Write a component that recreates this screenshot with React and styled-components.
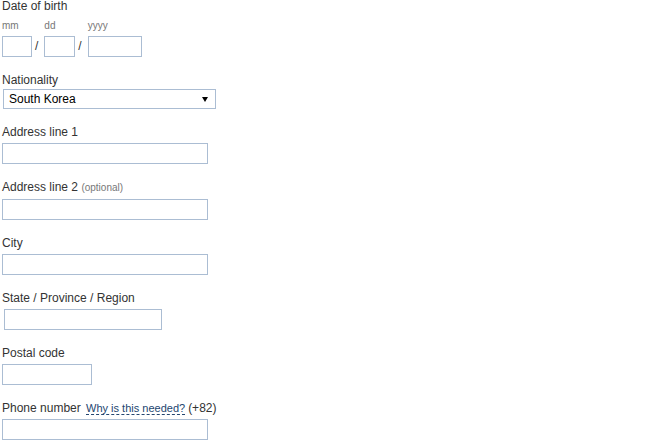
import React from 'react';
import styled, { createGlobalStyle } from 'styled-components';

const GlobalStyle = createGlobalStyle`
  html, body {
    margin: 0;
    padding: 0;
    background: #ffffff;
  }
  body {
    font-family: Arial, "Liberation Sans", sans-serif;
    color: #333333;
  }
`;

const Form = styled.form`
  display: flex;
  flex-direction: column;
  gap: 16px;
  margin-top: -1px;
  padding-left: 2px;
  width: 260px;
`;

const Field = styled.div`
  display: flex;
  flex-direction: column;
  align-items: flex-start;
`;

const Label = styled.label`
  font-size: 12px;
  line-height: 14px;
  color: #333333;
  margin-bottom: ${(p) => (p.$tight ? '2px' : '4px')};
  white-space: nowrap;
`;

const Optional = styled.span`
  font-size: 10px;
  color: #777777;
`;

const HelpLink = styled.a`
  font-size: 11px;
  color: #23456f;
  text-decoration: none;
  border-bottom: 1px dashed #23456f;
  margin-left: 2px;
  margin-right: 3px;
  cursor: help;
`;

const DateRow = styled.div`
  display: flex;
  align-items: flex-end;
  margin-top: 2px;
`;

const DatePart = styled.div`
  display: flex;
  flex-direction: column;
`;

const SubLabel = styled.span`
  font-size: 10px;
  line-height: 14px;
  color: #777777;
  margin-bottom: 3px;
`;

const Slash = styled.span`
  font-size: 12px;
  line-height: 21px;
  color: #333333;
  margin: 0 6px 0 3px;
`;

const TextInput = styled.input`
  box-sizing: border-box;
  width: ${(p) => p.$w}px;
  height: 21px;
  margin: 0 0 0 ${(p) => p.$offset || 0}px;
  padding: 1px 4px;
  border: 1px solid #abbdd3;
  border-radius: 0;
  background: #ffffff;
  font-family: Arial, "Liberation Sans", sans-serif;
  font-size: 12px;
  color: #000000;
  outline: none;
`;

const SelectWrap = styled.div`
  position: relative;
  margin-left: 1px;
  width: 213px;

  &::after {
    content: '';
    position: absolute;
    right: 8px;
    top: 8px;
    border-left: 3px solid transparent;
    border-right: 3px solid transparent;
    border-top: 5px solid #000000;
    pointer-events: none;
  }
`;

const Select = styled.select`
  box-sizing: border-box;
  width: 100%;
  height: 20px;
  margin: 0;
  padding: 0 0 0 5px;
  appearance: none;
  border: 1px solid #abbdd3;
  border-radius: 0;
  background: #ffffff;
  font-family: Arial, "Liberation Sans", sans-serif;
  font-size: 12px;
  color: #000000;
  outline: none;
`;

function App() {
  return (
    <>
      <GlobalStyle />
      <Form onSubmit={(e) => e.preventDefault()}>
        <Field>
          <Label>Date of birth</Label>
          <DateRow>
            <DatePart>
              <SubLabel>mm</SubLabel>
              <TextInput $w={30} maxLength={2} />
            </DatePart>
            <Slash>/</Slash>
            <DatePart>
              <SubLabel>dd</SubLabel>
              <TextInput $w={31} maxLength={2} />
            </DatePart>
            <Slash>/</Slash>
            <DatePart>
              <SubLabel>yyyy</SubLabel>
              <TextInput $w={54} maxLength={4} />
            </DatePart>
          </DateRow>
        </Field>

        <Field>
          <Label $tight>Nationality</Label>
          <SelectWrap>
            <Select defaultValue="KR">
              <option value="KR">South Korea</option>
              <option value="JP">Japan</option>
              <option value="US">United States</option>
            </Select>
          </SelectWrap>
        </Field>

        <Field>
          <Label>Address line 1</Label>
          <TextInput $w={206} />
        </Field>

        <Field>
          <Label>
            Address line 2 <Optional>(optional)</Optional>
          </Label>
          <TextInput $w={206} />
        </Field>

        <Field>
          <Label>City</Label>
          <TextInput $w={206} />
        </Field>

        <Field>
          <Label>State / Province / Region</Label>
          <TextInput $w={158} $offset={2} />
        </Field>

        <Field>
          <Label>Postal code</Label>
          <TextInput $w={90} />
        </Field>

        <Field>
          <Label>
            Phone number <HelpLink href="#">Why is this needed?</HelpLink>(+82)
          </Label>
          <TextInput $w={206} />
        </Field>
      </Form>
    </>
  );
}

export default App;
